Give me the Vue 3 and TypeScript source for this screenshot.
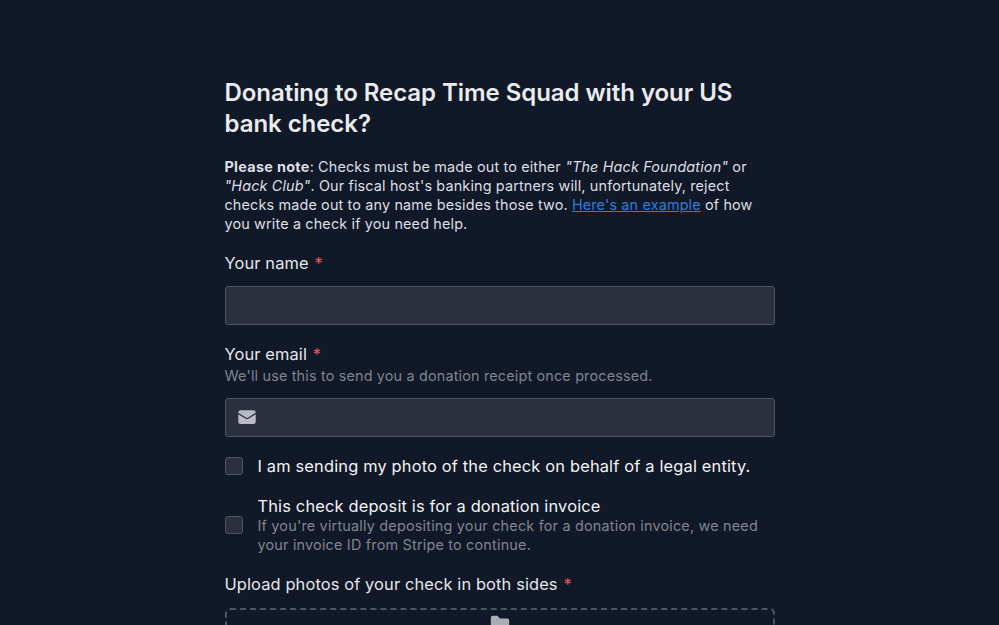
<script setup lang="ts">
const note = "Checks must be made out to either";
</script>

<template>
  <main class="page">
    <form class="form" @submit.prevent>
      <h1 class="title">Donating to Recap Time Squad with your US bank check?</h1>
      <p class="note">
        <strong>Please note</strong>: {{ note }} <em>"The Hack Foundation"</em> or
        <em>"Hack Club"</em>. Our fiscal host's banking partners will, unfortunately, reject
        checks made out to any name besides those two.
        <a href="#" class="link">Here's an example</a> of how you write a check if you need help.
      </p>

      <div class="field field-name">
        <label class="label">Your name <span class="req">*</span></label>
        <input class="input" type="text" />
      </div>

      <div class="field field-email">
        <label class="label">Your email <span class="req">*</span></label>
        <div class="hint">We'll use this to send you a donation receipt once processed.</div>
        <div class="input-wrap">
          <svg class="mail" viewBox="0 0 24 24" fill="currentColor" aria-hidden="true">
            <path d="M1.5 8.67v8.58a3 3 0 0 0 3 3h15a3 3 0 0 0 3-3V8.67l-8.93 5.5a3 3 0 0 1-3.14 0L1.5 8.67Z" />
            <path d="M22.5 6.9v-.15a3 3 0 0 0-3-3h-15a3 3 0 0 0-3 3v.15l9.71 5.98a1.5 1.5 0 0 0 1.58 0L22.5 6.9Z" />
          </svg>
          <input class="input input-icon" type="email" />
        </div>
      </div>

      <label class="check check-legal">
        <span class="box"></span>
        <span class="check-label">I am sending my photo of the check on behalf of a legal entity.</span>
      </label>

      <label class="check check-invoice">
        <span class="box"></span>
        <span class="check-body">
          <span class="check-label">This check deposit is for a donation invoice</span>
          <span class="check-hint">If you're virtually depositing your check for a donation invoice, we need your invoice ID from Stripe to continue.</span>
        </span>
      </label>

      <div class="field field-upload">
        <label class="label">Upload photos of your check in both sides <span class="req">*</span></label>
        <div class="drop">
          <svg class="folder" viewBox="0 0 24 24" fill="currentColor" aria-hidden="true">
            <path d="M2 6a2 2 0 0 1 2-2h5.2l2.8 3h8a2 2 0 0 1 2 2v9a2 2 0 0 1-2 2H4a2 2 0 0 1-2-2Z" />
          </svg>
        </div>
      </div>
    </form>
  </main>
</template>

<style>
html, body { margin: 0; background: #111827; overflow: hidden; }
</style>

<style scoped>
.page {
  height: 625px;
  overflow: hidden;
  background: #111827;
  display: flex;
  justify-content: center;
  font-family: Inter, "Liberation Sans", sans-serif;
  color: #f3f4f6;
}
.form { width: 550px; padding-top: 77px; }
.title { margin: 0; font-size: 24px; line-height: 31px; font-weight: 600; letter-spacing: -0.05px; color: #e9ebef; }
.note { margin: 18px 0 0; font-size: 14.4px; line-height: 19px; letter-spacing: 0.15px; color: #dcdfe4; }
.note strong { font-weight: 700; letter-spacing: 0.3px; }
.link { color: #2b7fdc; text-decoration: underline; }
.field { display: flex; flex-direction: column; }
.field-name { margin-top: 20px; }
.field-email { margin-top: 19px; }
.field-upload { margin-top: 19px; }
.label { font-size: 16.4px; line-height: 21px; letter-spacing: 0.13px; color: #e5e7eb; }
.req { color: #e0565b; margin-left: 1px; }
.hint { font-size: 14.4px; line-height: 19px; letter-spacing: 0.17px; margin-top: 1px; color: #80858f; }
.input {
  display: block;
  box-sizing: border-box;
  width: 100%;
  height: 39px;
  border: 1px solid #4b5563;
  border-radius: 3px;
  background: #2a303c;
  outline: none;
  color: #f3f4f6;
}
.field-name .input { margin-top: 12px; }
.input-wrap { position: relative; margin-top: 13px; }
.input-icon { padding-left: 44px; }
.mail { position: absolute; left: 12px; top: 9px; width: 20px; height: 20px; color: #b9bcc4; }
.check { display: flex; align-items: center; gap: 15px; }
.check-legal { margin-top: 19px; }
.check-invoice { margin-top: 19px; }
.box {
  flex: none;
  box-sizing: border-box;
  width: 18px;
  height: 18px;
  margin-bottom: 2px;
  border: 1px solid #4b5563;
  border-radius: 3px;
  background: #2a303c;
}
.check-body { display: flex; flex-direction: column; }
.check-label { font-size: 16.4px; line-height: 21px; letter-spacing: 0.17px; color: #f3f4f6; }
.check-hint { font-size: 14.4px; line-height: 19px; letter-spacing: 0.2px; margin: -1px 0 1px; color: #80858f; }
.drop {
  box-sizing: border-box;
  height: 160px;
  margin-top: 13px;
  border: 2px dashed #4b5563;
  border-radius: 5px;
  display: flex;
  justify-content: center;
}
.folder { width: 22px; height: 22px; color: #a9adb5; margin-top: 2px; }
</style>
